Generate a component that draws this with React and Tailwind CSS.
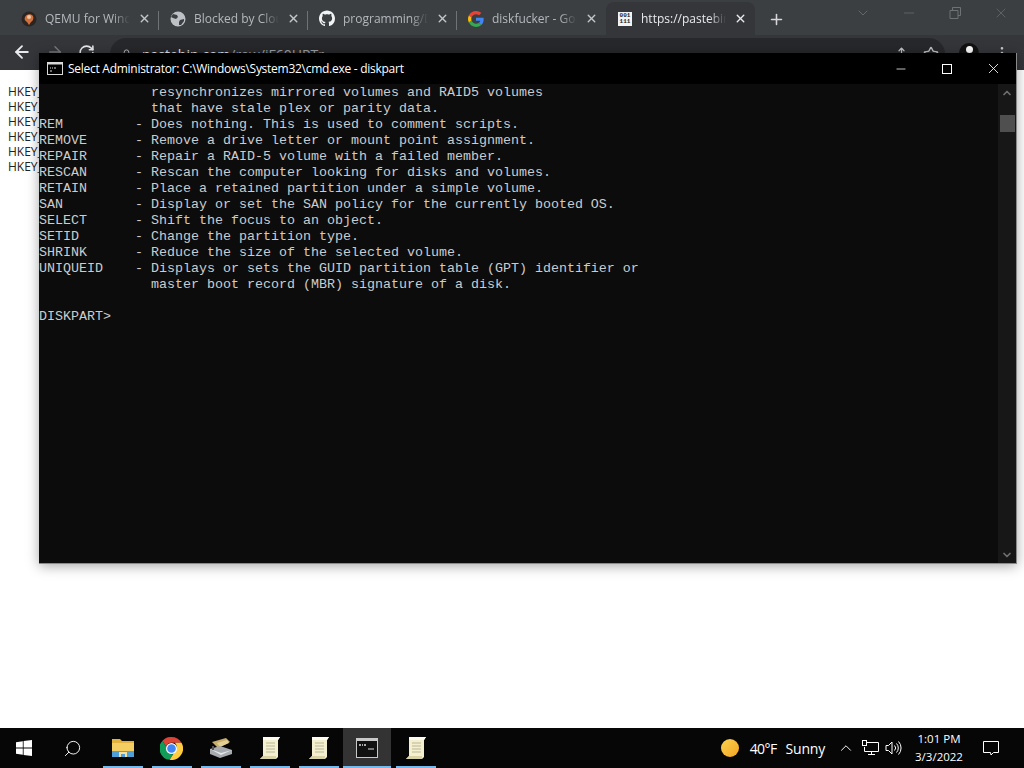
import { ArrowLeft, ArrowRight, RotateCw, Lock, X, Plus, ChevronDown, ChevronUp, Minus, Star, Search, Share, MoreVertical } from 'lucide-react';

const SANS = 'font-["Open_Sans","Noto_Sans",sans-serif]';

const TERMINAL = [
  '              resynchronizes mirrored volumes and RAID5 volumes',
  '              that have stale plex or parity data.',
  'REM         - Does nothing. This is used to comment scripts.',
  'REMOVE      - Remove a drive letter or mount point assignment.',
  'REPAIR      - Repair a RAID-5 volume with a failed member.',
  'RESCAN      - Rescan the computer looking for disks and volumes.',
  'RETAIN      - Place a retained partition under a simple volume.',
  'SAN         - Display or set the SAN policy for the currently booted OS.',
  'SELECT      - Shift the focus to an object.',
  'SETID       - Change the partition type.',
  'SHRINK      - Reduce the size of the selected volume.',
  'UNIQUEID    - Displays or sets the GUID partition table (GPT) identifier or',
  '              master boot record (MBR) signature of a disk.',
  '',
  'DISKPART>',
];

function QemuIcon() {
  return (
    <svg width="16" height="16" viewBox="0 0 16 16">
      <circle cx="8" cy="8" r="7.5" fill="#2a2422" />
      <path d="M4 6c1-3 6-4 8-1 1 2 0 5-2 6l-2 3-2-3C4 10 3 8 4 6z" fill="#d2703c" />
      <circle cx="8" cy="6" r="2" fill="#e9c9a8" />
    </svg>
  );
}

function GlobeIcon() {
  return (
    <svg width="16" height="16" viewBox="0 0 16 16">
      <circle cx="8" cy="8" r="7.5" fill="#bdc1c6" />
      <path d="M3 3l4 1 1 2-2 2-3-1-2-1zM10 9l4-1 0 2-3 4-2 0 0-3z" fill="#3c3f42" />
    </svg>
  );
}

function GithubIcon() {
  return (
    <svg width="17" height="17" viewBox="0 0 16 16" fill="#f1f3f4">
      <path d="M8 0C3.58 0 0 3.58 0 8c0 3.54 2.29 6.53 5.47 7.59.4.07.55-.17.55-.38 0-.19-.01-.82-.01-1.49-2.01.37-2.53-.49-2.69-.94-.09-.23-.48-.94-.82-1.13-.28-.15-.68-.52-.01-.53.63-.01 1.08.58 1.23.82.72 1.21 1.87.87 2.33.66.07-.52.28-.87.51-1.07-1.78-.2-3.64-.89-3.64-3.95 0-.87.31-1.59.82-2.15-.08-.2-.36-1.02.08-2.12 0 0 .67-.21 2.2.82.64-.18 1.32-.27 2-.27s1.36.09 2 .27c1.53-1.04 2.2-.82 2.2-.82.44 1.1.16 1.92.08 2.12.51.56.82 1.27.82 2.15 0 3.07-1.87 3.75-3.65 3.95.29.25.54.73.54 1.48 0 1.07-.01 1.93-.01 2.2 0 .21.15.46.55.38A8.01 8.01 0 0 0 16 8c0-4.42-3.58-8-8-8z" />
    </svg>
  );
}

function GoogleIcon() {
  return (
    <svg width="16" height="16" viewBox="0 0 48 48">
      <path fill="#EA4335" d="M24 9.5c3.5 0 6.7 1.2 9.2 3.6l6.9-6.9C35.9 2.4 30.5 0 24 0 14.6 0 6.5 5.4 2.6 13.2l8 6.2C12.5 13.7 17.8 9.5 24 9.5z" />
      <path fill="#4285F4" d="M47 24.5c0-1.6-.1-3.1-.4-4.5H24v9h12.9c-.6 3-2.2 5.5-4.7 7.2l7.7 6c4.5-4.2 7.1-10.3 7.1-17.7z" />
      <path fill="#FBBC05" d="M10.6 28.6c-.5-1.4-.8-3-.8-4.6s.3-3.2.8-4.6l-8-6.2C.9 16.5 0 20.1 0 24s.9 7.5 2.6 10.8l8-6.2z" />
      <path fill="#34A853" d="M24 48c6.5 0 11.9-2.1 15.9-5.8l-7.7-6c-2.2 1.4-4.9 2.3-8.2 2.3-6.2 0-11.5-4.2-13.4-9.9l-8 6.2C6.5 42.6 14.6 48 24 48z" />
    </svg>
  );
}

function BinaryIcon() {
  return (
    <div className="w-[14px] h-[14px] bg-[#f1f3f4] text-[#222] text-[6px] leading-[6.5px] font-bold font-['Liberation_Mono',monospace] text-center pt-px">
      001
      <br />
      111
    </div>
  );
}

function Tab({ icon, title, active, sep }) {
  return (
    <div className={`h-[33px] w-[149px] shrink-0 flex items-center pl-[11px] pr-[7px] relative rounded-t-lg ${active ? 'bg-[#35363a]' : ''}`}>
      <div className="w-4 h-4 flex items-center justify-center shrink-0">{icon}</div>
      <div className={`ml-2 w-[85px] text-[12px] whitespace-nowrap overflow-hidden [mask-image:linear-gradient(to_right,black_80%,transparent)] ${active ? 'text-[#e8eaed]' : 'text-[#b4b8bc]'}`}>
        {title}
      </div>
      <X size={13} strokeWidth={2.6} className={`ml-[8px] shrink-0 ${active ? 'text-[#e8eaed]' : 'text-[#c4c7ca]'}`} />
      {sep && <div className="absolute right-0 top-[9px] w-px h-[19px] bg-[#707376]" />}
    </div>
  );
}

function WinLogo() {
  return (
    <svg width="16" height="16" viewBox="0 0 16 16" fill="#fff">
      <path d="M0 2.2 6.8 1.2V7.6H0zM7.6 1.1 16 0V7.6H7.6zM0 8.4H6.8V14.8L0 13.8zM7.6 8.4H16V16L7.6 14.9z" />
    </svg>
  );
}

function FolderIcon() {
  return (
    <svg width="22" height="20" viewBox="0 0 22 20">
      <path d="M0 1h8l2 2h12v15H0z" fill="#e2b23e" />
      <path d="M0 5h22v13H0z" fill="#f4cd63" />
      <path d="M0 13h22v6H0z" fill="#4f9fd8" />
      <path d="M7 19v-5h8v5h-2v-3H9v3z" fill="#f5e0a0" />
    </svg>
  );
}

function ChromeIcon() {
  return (
    <svg width="23" height="23" viewBox="0 0 48 48">
      <path fill="#db4437" d="M24 0a24 24 0 0 1 20.8 12H24a12 12 0 0 0-11.4 8.3L5.2 7.6A24 24 0 0 1 24 0z" />
      <path fill="#0f9d58" d="M5.2 7.6 15 24a10 10 0 0 0 12.5 11.5L20.2 47.7A24 24 0 0 1 5.2 7.6z" />
      <path fill="#ffcd40" d="M44.8 12A24 24 0 0 1 20.2 47.7L31 30a12 12 0 0 0 0-18z" />
      <circle cx="24" cy="24" r="11.5" fill="#fff" />
      <circle cx="24" cy="24" r="9" fill="#4285f4" />
    </svg>
  );
}

function DiskIcon() {
  return (
    <svg width="24" height="20" viewBox="0 0 24 20">
      <path d="M3 4 17 0l4 4-12 6z" fill="#c9ae6a" />
      <path d="M8 5l10-3 2 3-9 4z" fill="#e3cf94" />
      <path d="M1 11l10-3 12 4v4L11 20 1 16z" fill="#a7abb0" />
      <path d="M1 11l11 4 11-3-11 5z" fill="#e6e7e8" />
      <path d="M3 8h2v4H3z" fill="#555" />
    </svg>
  );
}

function ScrollIcon() {
  return (
    <svg width="22" height="24" viewBox="0 0 22 24">
      <path d="M4 1h17l-2 3v17l-2 2H1l3-3z" fill="#f3efcf" />
      <path d="M4 1h17l-2 3H4z" fill="#fffdf0" />
      <path d="M1 23l3-3h13v3z" fill="#d8d2a4" />
      <path d="M7 7h9M7 10h9M7 13h9M7 16h9" stroke="#b9b596" strokeWidth="1" />
    </svg>
  );
}

function CmdIcon() {
  return (
    <svg width="22" height="20" viewBox="0 0 22 20">
      <rect x="0.5" y="0.5" width="21" height="19" fill="#111" stroke="#c8c8c8" />
      <rect x="0.5" y="0.5" width="21" height="2.5" fill="#c8c8c8" />
      <path d="M3 7h2M6 7h1M8 7h2" stroke="#ddd" strokeWidth="1.5" />
      <path d="M12 11h6" stroke="#ddd" strokeWidth="1" />
    </svg>
  );
}

function NetworkIcon() {
  return (
    <svg width="18" height="16" viewBox="0 0 18 16" fill="none" stroke="#fff">
      <path d="M4.5 2.5H16.5V11.5H2.5V7" />
      <path d="M9.5 11.5V14.5M6 14.5H13" />
      <rect x="0.5" y="0.5" width="4" height="5" fill="#060606" />
    </svg>
  );
}

function SpeakerIcon() {
  return (
    <svg width="17" height="16" viewBox="0 0 17 16" fill="none" stroke="#fff">
      <path d="M1 5.5H3.5L7 2V14L3.5 10.5H1z" />
      <path d="M9.5 5.5a3.5 3.5 0 0 1 0 5M11.5 3.5a6.5 6.5 0 0 1 0 9M13.5 1.5a9.5 9.5 0 0 1 0 13" />
    </svg>
  );
}

function NotifyIcon() {
  return (
    <svg width="16" height="16" viewBox="0 0 16 16" fill="none" stroke="#fff">
      <path d="M0.5 1.5H15.5V12.5H10.5L8 15L7.5 12.5H0.5z" />
    </svg>
  );
}

function TaskItem({ children, running, focused }) {
  return (
    <div className={`relative shrink-0 flex items-center justify-center h-full ${focused ? 'w-[48px] bg-[#333333]' : 'w-[49px]'}`}>
      {children}
      {running && <div className={`absolute bottom-0 h-[2px] bg-[#76b9ed] ${focused ? 'inset-x-0' : 'left-[5px] right-1'}`} />}
    </div>
  );
}

export default function App() {
  return (
    <div className={`relative w-[1024px] h-[768px] overflow-hidden flex flex-col bg-white ${SANS}`}>
      <div className="h-[35px] shrink-0 bg-[#3c3f42] flex items-end pl-[10px] relative">
        <Tab icon={<QemuIcon />} title="QEMU for Windows" sep />
        <Tab icon={<GlobeIcon />} title="Blocked by Cloudflare" sep />
        <Tab icon={<GithubIcon />} title="programming/Disk" sep />
        <Tab icon={<GoogleIcon />} title="diskfucker - Google" />
        <Tab icon={<BinaryIcon />} title="https://pastebin.com" active />
        <div className="ml-[13px] mb-[7px] text-[#d5d7d9]">
          <Plus size={17} strokeWidth={2.2} />
        </div>
        <div className="flex-1" />
        <div className="flex items-center self-start text-[#6f7275] h-[26px] pr-[15px] gap-[30px]">
          <ChevronDown size={16} strokeWidth={1.2} />
          <Minus size={16} strokeWidth={1} />
          <svg width="16" height="16" viewBox="0 0 16 16" fill="none" stroke="currentColor">
            <path d="M3 5.5h8v8H3zM5.5 5V2.5h8v8H11" />
          </svg>
          <X size={16} strokeWidth={1} />
        </div>
      </div>

      <div className="h-[35px] shrink-0 bg-[#35363a] flex items-center text-[#e8eaed]">
        <div className="w-[110px] flex items-center pl-[12px] gap-[14px] self-start pt-[7px]">
          <ArrowLeft size={20} strokeWidth={2.2} />
          <ArrowRight size={18} strokeWidth={2} className="text-[#77797c]" />
          <RotateCw size={17} strokeWidth={2.2} />
        </div>
        <div className="w-[835px] h-[32px] self-end rounded-t-2xl bg-[#27282b] flex items-center pl-[11px]">
          <Lock size={11} className="text-[#c0c3c6]" />
          <span className="ml-[10px] text-[14px] text-[#e8eaed]">
            pastebin.com<span className="text-[#9aa0a6]">/raw/iF60HPTr</span>
          </span>
          <div className="flex-1" />
          <Share size={15} className="text-[#bfc2c5] mr-[14px]" />
          <Star size={16} className="text-[#bfc2c5] mr-[6px]" />
        </div>
        <div className="ml-[14px] w-[20px] h-[20px] rounded-full bg-[#111] flex items-start justify-center pt-[3px]">
          <div className="w-[7px] h-[7px] rounded-full bg-white" />
        </div>
        <MoreVertical size={16} className="ml-[15px] text-[#c7c9cc]" />
      </div>

      <div className="flex-1 bg-white pt-[14px] pl-[8px] text-[12px] leading-[15px] text-[#222] font-['Open_Sans',sans-serif]">
        <div>HKEY_</div>
        <div>HKEY_</div>
        <div>HKEY_</div>
        <div>HKEY_</div>
        <div>HKEY_</div>
        <div>HKEY_</div>
      </div>

      <div className="h-[40px] shrink-0 bg-[#060606] flex items-center text-white">
        <div className="w-[48px] h-full flex items-center justify-center">
          <WinLogo />
        </div>
        <div className="w-[48px] h-full flex items-center justify-center">
          <Search size={19} strokeWidth={1.2} className="-scale-x-100" />
        </div>
        <div className="w-[2px]" />
        <TaskItem running><FolderIcon /></TaskItem>
        <TaskItem running><ChromeIcon /></TaskItem>
        <TaskItem running><DiskIcon /></TaskItem>
        <TaskItem running><ScrollIcon /></TaskItem>
        <TaskItem running><ScrollIcon /></TaskItem>
        <TaskItem running focused><CmdIcon /></TaskItem>
        <TaskItem running><ScrollIcon /></TaskItem>
        <div className="flex-1" />
        <div className="w-[18px] h-[18px] rounded-full bg-gradient-to-br from-[#fbd24e] to-[#f3a41f]" />
        <span className="ml-[11px] text-[14px] tracking-[-0.6px]">40°F</span>
        <span className="ml-[9px] text-[14px] tracking-[-0.2px]">Sunny</span>
        <ChevronUp size={18} strokeWidth={1.3} className="ml-[12px]" />
        <div className="ml-[7px]"><NetworkIcon /></div>
        <div className="ml-[5px]"><SpeakerIcon /></div>
        <div className="ml-[8px] w-[58px] text-center text-[11.5px] leading-[18px]">
          <div>1:01 PM</div>
          <div>3/3/2022</div>
        </div>
        <div className="ml-[15px] mr-[25px]"><NotifyIcon /></div>
      </div>

      {/* cmd window */}
      <div className="absolute left-[39px] top-[53px] w-[978px] h-[511px] flex flex-col bg-black border-b border-r border-[#8a8a8a] shadow-[0_2px_12px_rgba(0,0,0,0.35)]">
        <div className="h-[31px] shrink-0 flex items-center text-white">
          <svg width="16" height="13" viewBox="0 0 16 13" className="ml-[8px] shrink-0">
            <rect x="0.5" y="0.5" width="15" height="12" fill="#000" stroke="#d8d8d8" />
            <rect x="0.5" y="0.5" width="15" height="2" fill="#d8d8d8" />
            <path d="M3 6h1M5 6h1M7 6h2M3 9h2" stroke="#ddd" />
          </svg>
          <span className="ml-[5px] text-[12px] tracking-[-0.27px] whitespace-nowrap">Select Administrator: C:\Windows\System32\cmd.exe - diskpart</span>
          <div className="flex-1" />
          <Minus size={14} strokeWidth={1.3} className="mr-[34px]" />
          <div className="w-[10px] h-[10px] border border-white mr-[33px]" />
          <X size={17} strokeWidth={1.2} className="mr-[14px]" />
        </div>
        <div className="flex-1 min-h-0 flex">
          <pre className="flex-1 pt-px bg-[#0c0c0c] text-[#cccccc] text-[13.33px] leading-[16px] font-['Liberation_Mono',monospace] m-0 overflow-hidden">
            {TERMINAL.join('\n')}
          </pre>
          <div className="w-[18px] shrink-0 bg-[#171717] flex flex-col items-center text-[#6e6e6e]">
            <ChevronUp size={12} strokeWidth={3.5} className="mt-[3px]" />
            <div className="mt-[16px] w-[15px] h-[17px] bg-[#4f4f4f]" />
            <div className="flex-1" />
            <ChevronDown size={12} strokeWidth={3.5} className="mb-[2px]" />
          </div>
        </div>
      </div>
    </div>
  );
}
